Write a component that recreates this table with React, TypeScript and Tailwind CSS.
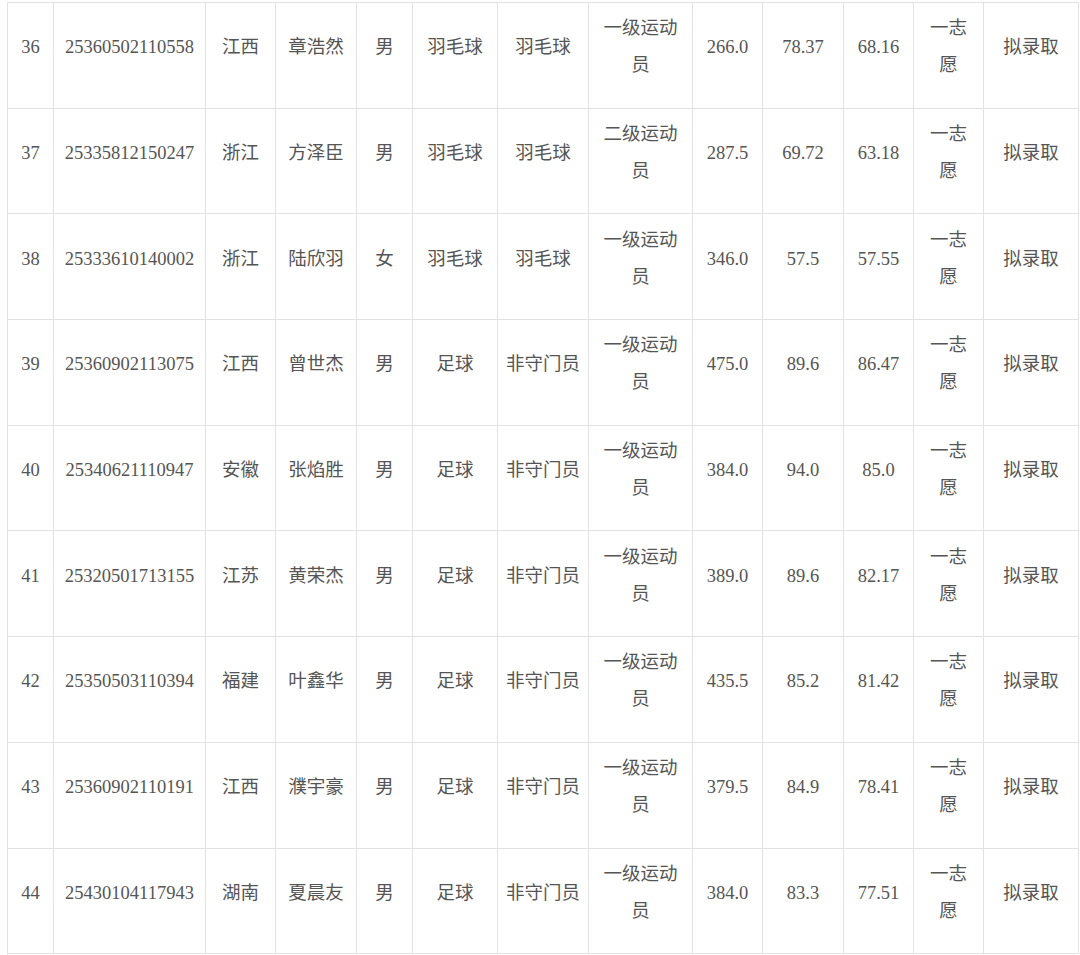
import React from "react";

const rows = [
  ["36", "25360502110558", "江西", "章浩然", "男", "羽毛球", "羽毛球", "一级运动员", "266.0", "78.37", "68.16"],
  ["37", "25335812150247", "浙江", "方泽臣", "男", "羽毛球", "羽毛球", "二级运动员", "287.5", "69.72", "63.18"],
  ["38", "25333610140002", "浙江", "陆欣羽", "女", "羽毛球", "羽毛球", "一级运动员", "346.0", "57.5", "57.55"],
  ["39", "25360902113075", "江西", "曾世杰", "男", "足球", "非守门员", "一级运动员", "475.0", "89.6", "86.47"],
  ["40", "25340621110947", "安徽", "张焰胜", "男", "足球", "非守门员", "一级运动员", "384.0", "94.0", "85.0"],
  ["41", "25320501713155", "江苏", "黄荣杰", "男", "足球", "非守门员", "一级运动员", "389.0", "89.6", "82.17"],
  ["42", "25350503110394", "福建", "叶鑫华", "男", "足球", "非守门员", "一级运动员", "435.5", "85.2", "81.42"],
  ["43", "25360902110191", "江西", "濮宇豪", "男", "足球", "非守门员", "一级运动员", "379.5", "84.9", "78.41"],
  ["44", "25430104117943", "湖南", "夏晨友", "男", "足球", "非守门员", "一级运动员", "384.0", "83.3", "77.51"],
];

const widths = [46, 152, 70, 81, 56, 85, 91, 104, 70, 81, 70, 70, 95];

export default function App() {
  return (
    <div className="w-[1080px] h-[955px] bg-white overflow-hidden pt-[2px] pl-[7px]">
      <table
        className="border-collapse table-fixed text-[18.5px] text-[#555555]"
        style={{ width: 1071, fontFamily: '"Liberation Serif", "Noto Sans CJK SC", serif' }}
      >
        <colgroup>
          {widths.map((w, i) => (
            <col key={i} style={{ width: w }} />
          ))}
        </colgroup>
        <tbody>
          {rows.map((r) => (
            <tr key={r[0]} className="h-[105.7px]">
              {r.slice(0, 7).map((c, i) => (
                <td key={i} className="border border-[#e2e2e2] text-center align-middle pb-[16px] leading-[36px] p-0">
                  {c}
                </td>
              ))}
              <td className="border border-[#e2e2e2] text-center align-middle pb-[16px] leading-[37px] px-[6px]">
                {r[7].slice(0, 4)}
                <br />
                {r[7].slice(4)}
              </td>
              {r.slice(8).map((c, i) => (
                <td key={i} className="border border-[#e2e2e2] text-center align-middle pb-[16px] leading-[36px] p-0">
                  {c}
                </td>
              ))}
              <td className="border border-[#e2e2e2] text-center align-middle pb-[16px] leading-[37px] p-0">
                一志
                <br />
                愿
              </td>
              <td className="border border-[#e2e2e2] text-center align-middle pb-[16px] leading-[36px] p-0">
                拟录取
              </td>
            </tr>
          ))}
        </tbody>
      </table>
    </div>
  );
}
